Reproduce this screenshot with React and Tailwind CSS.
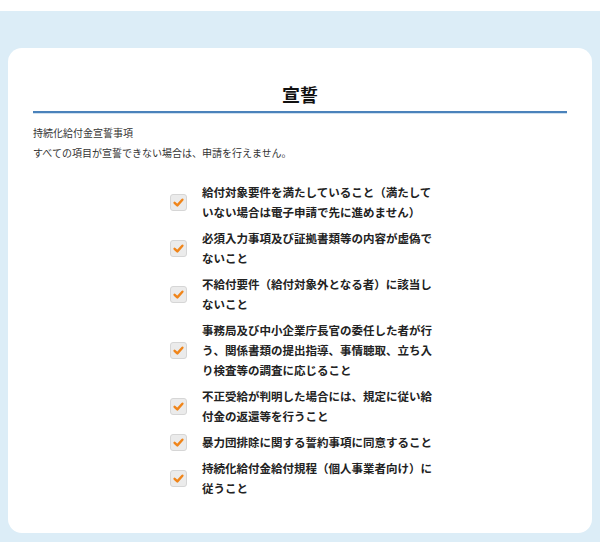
import React from 'react';

const items = [
  ['給付対象要件を満たしていること（満たして', 'いない場合は電子申請で先に進めません）'],
  ['必須入力事項及び証拠書類等の内容が虚偽で', 'ないこと'],
  ['不給付要件（給付対象外となる者）に該当し', 'ないこと'],
  ['事務局及び中小企業庁長官の委任した者が行', 'う、関係書類の提出指導、事情聴取、立ち入', 'り検査等の調査に応じること'],
  ['不正受給が判明した場合には、規定に従い給', '付金の返還等を行うこと'],
  ['暴力団排除に関する誓約事項に同意すること'],
  ['持続化給付金給付規程（個人事業者向け）に', '従うこと'],
];

function Check() {
  return (
    <span className="flex h-[17px] w-[17px] shrink-0 items-center justify-center rounded-[3px] border border-[#d6d6d6] bg-[#ebebeb]">
      <svg viewBox="0 0 16 16" className="h-[13px] w-[13px]">
        <path d="M3.2 8.4 L6.6 11.6 L12.8 4.6" fill="none" stroke="#f0851a" strokeWidth="3" strokeLinecap="round" strokeLinejoin="round" />
      </svg>
    </span>
  );
}

export default function App() {
  return (
    <div
      className="h-[542px] overflow-hidden bg-white pt-[11px]"
      style={{ fontFamily: '"Noto Sans CJK JP", "Noto Sans", sans-serif' }}
    >
      <div className="h-full bg-[#dcedf7] px-[8px] pt-[37px]">
        <div className="h-[485px] rounded-[14px] bg-white px-[25px] pt-[33px]">
          <h1 className="text-center text-[18px] font-bold leading-[26px] text-[#111]">宣誓</h1>
          <div className="mt-[4px] h-[2px] bg-[#4a82bb] shadow-[0_1px_0_#cfe0ef]" />
          <p className="mt-[10px] text-[10px] leading-[20px] text-[#333]">持続化給付金宣誓事項</p>
          <p className="text-[10px] leading-[20px] text-[#333]">すべての項目が宣誓できない場合は、申請を行えません。</p>
          <ul className="mt-[19px] flex flex-col gap-[6px] pl-[137px]">
            {items.map((lines, i) => (
              <li key={i} className="flex items-center gap-[15px]">
                <Check />
                <div className="text-[11.5px] font-bold leading-[20px] text-[#222]">
                  {lines.map((l, j) => (
                    <div key={j} className="whitespace-nowrap">{l}</div>
                  ))}
                </div>
              </li>
            ))}
          </ul>
        </div>
      </div>
    </div>
  );
}
